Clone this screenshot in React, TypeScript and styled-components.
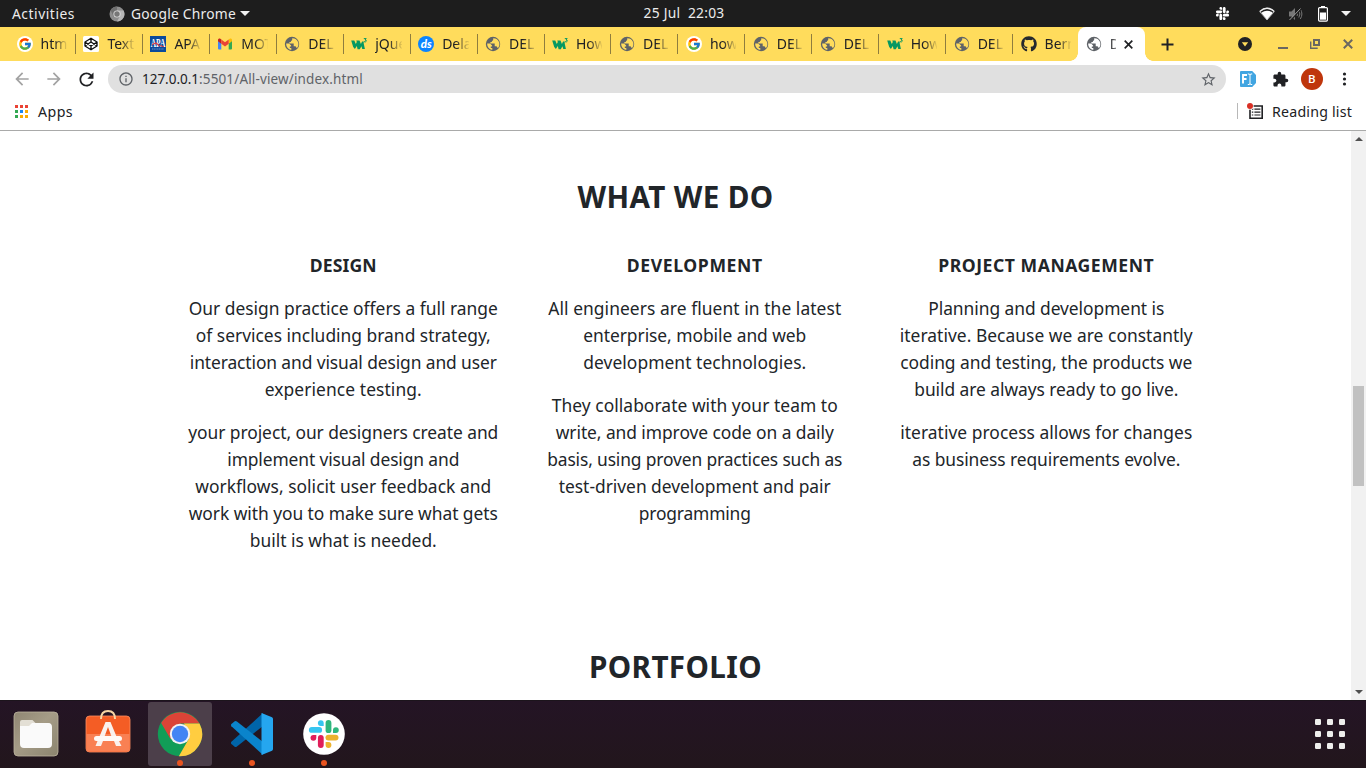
import React, { useLayoutEffect, useRef, useState } from 'react';
import styled, { createGlobalStyle } from 'styled-components';
import { FcGoogle } from 'react-icons/fc';
import { FaGithub, FaSlack } from 'react-icons/fa';
import { MdExtension, MdStarBorder, MdArrowBack, MdArrowForward, MdRefresh, MdInfoOutline } from 'react-icons/md';

const GlobalStyle = createGlobalStyle`
  * { box-sizing: border-box; }
  body { margin: 0; overflow: hidden; background: #fff; }
  svg { display: block; flex: none; }
`;

const Screen = styled.div`
  width: 1366px;
  height: 768px;
  display: flex;
  flex-direction: column;
  overflow: hidden;
  font-family: 'Noto Sans', 'Open Sans', sans-serif;
  font-size: 14px;
  color: #202124;
`;

const FitText = styled.span`
  display: inline-block;
  white-space: pre;
`;

/* Tracks a run of text so that it fills the given width. */
function Fit({ w, children }: { w: number; children: string }) {
  const ref = useRef<HTMLSpanElement>(null);
  const [spacing, setSpacing] = useState(0);
  useLayoutEffect(() => {
    const natural = ref.current!.getBoundingClientRect().width;
    setSpacing((w - natural) / children.length);
  }, [w, children]);
  return <FitText ref={ref} style={{ letterSpacing: spacing }}>{children}</FitText>;
}

/* ---------- desktop top bar ---------- */
const TopBar = styled.header`
  height: 27px;
  flex: none;
  display: grid;
  grid-template-columns: 1fr auto 1fr;
  align-items: center;
  background: #1d1d1d;
  color: #ececec;
  font-size: 13.8px;
  line-height: 26px;
`;
const TopLeft = styled.div`
  display: flex;
  align-items: center;
  padding-left: 12px;
`;
const AppMenu = styled.div`
  display: flex;
  align-items: center;
  margin-left: 34px;
  gap: 6px;
`;
const Clock = styled.div`
  padding-left: 2px;
  line-height: 24px;
  padding-bottom: 2px;
`;
const Tray = styled.div`
  display: flex;
  align-items: center;
  justify-content: flex-end;
  padding-right: 15px;
`;
const TrayItem = styled.span<{ $gap: number }>`
  display: flex;
  margin-left: ${p => p.$gap}px;
`;
const Caret = styled.i<{ $ml?: number }>`
  border: 5px solid transparent;
  border-top-color: #f2f2f2;
  border-bottom: 0;
  margin-left: ${p => p.$ml || 0}px;
`;

/* ---------- tab strip ---------- */
const TabStrip = styled.div`
  height: 34px;
  flex: none;
  display: flex;
  background: #ffdc5c;
  padding-left: 9px;
`;
const Tab = styled.div`
  width: 66.95px;
  flex: none;
  display: flex;
  align-items: center;
  padding-left: 7.5px;
`;
const TabTitle = styled.span`
  width: 27px;
  margin-left: 8px;
  overflow: hidden;
  white-space: nowrap;
  font-size: 14px;
  line-height: 20px;
  mask-image: linear-gradient(90deg, #000 50%, transparent 104%);
`;
const TabRule = styled.span<{ $hidden?: boolean }>`
  width: 1px;
  height: 20px;
  margin-left: 8px;
  background: ${p => (p.$hidden ? 'transparent' : '#8f7d3e')};
`;
const ActiveTab = styled.div`
  width: 67px;
  display: flex;
  align-items: center;
  padding-left: 8px;
  background: #fff;
  border-radius: 8px 8px 0 0;
  position: relative;
  margin-left: -2.2px;
  &::before, &::after {
    content: '';
    position: absolute;
    bottom: 0;
    width: 8px;
    height: 8px;
  }
  &::before { left: -8px; background: radial-gradient(circle at 0 0, transparent 7.5px, #fff 8px); }
  &::after { right: -8px; background: radial-gradient(circle at 100% 0, transparent 7.5px, #fff 8px); }
`;
const ActiveTitle = styled.span`
  width: 6px;
  margin: 0 8px 0 8px;
  overflow: hidden;
  line-height: 20px;
  mask-image: linear-gradient(90deg, #000, #0008);
`;
const WindowButtons = styled.div`
  flex: 1;
  display: flex;
  align-items: center;
  padding-left: 16px;
`;
const Push = styled.span`flex: 1;`;
const WinButton = styled.span<{ $mr: number }>`
  display: flex;
  margin-right: ${p => p.$mr}px;
`;
const RoundFav = styled.span<{ $bg: string }>`
  width: 16px;
  height: 16px;
  flex: none;
  border-radius: 50%;
  display: flex;
  align-items: center;
  justify-content: center;
  background: ${p => p.$bg};
  color: #fff;
  font: italic 900 11.5px/14px 'Lato', sans-serif;
`;

/* ---------- toolbar ---------- */
const Toolbar = styled.div`
  height: 36px;
  flex: none;
  display: flex;
  align-items: center;
  padding: 0 12px;
`;
const NavButton = styled.span<{ $off?: boolean }>`
  display: flex;
  flex: none;
  width: 20px;
  margin-right: 12px;
  color: ${p => (p.$off ? '#a3a3a3' : '#202124')};
`;
const Address = styled.div`
  width: 1118px;
  flex: none;
  height: 28px;
  border-radius: 14px;
  background: #e0e0e0;
  display: flex;
  align-items: center;
  padding: 0 9px 0 10px;
  color: #5f6368;
`;
const Url = styled.span`
  flex: 1;
  margin-left: 8px;
  font-size: 13.5px;
`;
const Host = styled.span`color: #202124;`;
const Avatar = styled.span`
  width: 22px;
  height: 22px;
  flex: none;
  border-radius: 50%;
  margin: 0 13px 0 12px;
  background: #bf360c;
  color: #fff;
  font: 500 11.5px/22px Roboto, sans-serif;
  text-align: center;
`;
const Extension = styled.span`
  display: flex;
  flex: none;
  margin: 0 16px 0 14px;
`;

const Bookmarks = styled.div`
  height: 34px;
  flex: none;
  display: flex;
  align-items: center;
  padding: 0 14px 5px 15px;
  border-bottom: 1px solid #a9aaa9;
  font-size: 14.2px;
  line-height: 20px;
`;
const AppsLabel = styled.span`
  margin-left: 10px;
  padding-top: 2px;
`;
const BookmarkRule = styled.span`
  width: 1px;
  height: 16px;
  background: #b8b8b8;
  margin-right: 9px;
`;
const ReadingLabel = styled.span`
  margin-left: 8px;
  padding-top: 2px;
`;

/* ---------- web page ---------- */
const Viewport = styled.main`
  height: 569px;
  flex: none;
  display: flex;
`;
const Page = styled.div`
  width: 1351px;
  color: #212529;
  text-align: center;
  padding-top: 43px;
`;
const Title = styled.h2`
  margin: 0;
  font-size: 29.6px;
  font-weight: 700;
  line-height: 45px;
`;
const Services = styled.section`
  display: grid;
  grid-template-columns: repeat(3, 351.5px);
  padding: 33px 0 0 167.5px;
  height: 425px;
`;
const Service = styled.article`
  font-size: 17.4px;
  line-height: 27px;
`;
const ServiceTitle = styled.h3`
  margin: 0 0 16px;
  font-size: 17.6px;
  font-weight: 700;
  line-height: 27px;
`;
const Paragraph = styled.p`
  margin: 0 0 16px;
`;
const Line = styled.span`
  display: block;
  height: 27px;
`;

const ScrollTrack = styled.div`
  width: 15px;
  background: #f1f1f1;
  display: flex;
  flex-direction: column;
  align-items: center;
  padding: 6px 0;
`;
const ScrollArrow = styled.i<{ $up?: boolean }>`
  border: 4px solid transparent;
  ${p => (p.$up ? 'border-bottom-color' : 'border-top-color')}: #505050;
  ${p => (p.$up ? 'border-top' : 'border-bottom')}: 0;
`;
const ScrollThumb = styled.div`
  width: 11px;
  height: 100px;
  margin: 245px 0 auto;
  background: #c1c1c1;
`;

/* ---------- dock ---------- */
const Dock = styled.footer`
  height: 68px;
  flex: none;
  display: flex;
  align-items: flex-start;
  gap: 8px;
  padding: 2px 20px 0 4px;
  background: linear-gradient(#241425, #22161c);
  box-shadow: inset 0 1px #1c141c;
`;
const DockItem = styled.div<{ $active?: boolean }>`
  width: 64px;
  height: 64px;
  border-radius: 3px;
  display: flex;
  flex-direction: column;
  align-items: center;
  padding-top: 8px;
  background: ${p => (p.$active ? '#4c3f4a' : 'transparent')};
`;
const RunningDot = styled.i`
  width: 6px;
  height: 6px;
  border-radius: 50%;
  margin-top: 2px;
  background: #e95420;
`;
const AppGrid = styled.div`
  display: grid;
  grid-template-columns: repeat(3, 6px);
  grid-auto-rows: 6px;
  gap: 6px;
  margin: 17px 1px 0 auto;
`;
const GridDot = styled.i`
  background: #eeeeec;
  border-radius: 1.2px;
`;

/* ---------- drawings ---------- */
function Globe({ land = '#ffdc5c' }: { land?: string }) {
  return (
    <svg width="16" height="16" viewBox="0 0 16 16">
      <circle cx="8" cy="8" r="7.2" fill="#5f6368" />
      <path d="M8.200 2.300v1.300c0 .8-.5 1.300-1.300 1.300v1.200H5.400v1.400h4.300v2.800h1.300q1 0 1.300 1.300l.6.500A6 6 0 0 0 10.200 2.400zM2.200 7.400h2.900l2 2v1.100H5.800v1.600h1.500v1.800A6 6 0 0 1 2.200 7.400z" fill={land} />
    </svg>
  );
}
const GoogleFav = () => <RoundFav $bg="#fff"><FcGoogle size={14} /></RoundFav>;
const CodepenFav = () => (
  <svg width="16" height="16" viewBox="0 0 16 16">
    <rect width="16" height="16" rx="1.5" fill="#fff" />
    <path d="M8 2.2l6 3.8v4l-6 3.800L2 10V6zM8 2.200V6M8 10v3.800M2 6l6 4 6-4M2 10l6-4 6 4" fill="none" stroke="#111" strokeWidth="1.350" strokeLinejoin="round" />
  </svg>
);
const ApaFav = () => (
  <svg width="16" height="16" viewBox="0 0 16 16">
    <rect width="16" height="16" fill="#0a4a9c" />
    <text x="8" y="10.500" textAnchor="middle" fontFamily="Liberation Serif" fontWeight="700" fontSize="11.500" textLength="14.500" lengthAdjust="spacingAndGlyphs" fill="#fff">APA</text>
    <path d="M2 8.500l4-1.500 3 2.500 5 1" stroke="#e33b41" strokeWidth="1.100" fill="none" />
    <path d="M2 13h12" stroke="#6c93c8" strokeWidth="1.200" strokeDasharray="1.200 .5" />
  </svg>
);
const GmailFav = () => (
  <svg width="16" height="16" viewBox="0 0 16 16">
    <path d="M1 4.200v8.300q0 1 1 1h2.300V7z" fill="#4285f4" />
    <path d="M15 4.200v8.300q0 1-1 1h-2.300V7z" fill="#34a853" />
    <path d="M11.700 3.400L13 2.600q2-.7 2 1.400v1.200l-3.300 2.500z" fill="#fbbc04" />
    <path d="M4.300 3.400L3 2.600Q1 1.900 1 4v1.200l3.300 2.500z" fill="#c5221f" />
    <path d="M4.300 3.400L8 6.200l3.700-2.800v4.300L8 10.500 4.300 7.700z" fill="#ea4335" />
  </svg>
);
const W3Fav = () => (
  <svg width="16" height="16" viewBox="0 0 16 16">
    <path d="M.2 4.500h3.100l1.500 3.600 1-2.200-.5-1.400h3.200l1.400 3.400 1.200-2.400h1.600v2l1.200 5.500h-2.600l-.9-2.800-1.600 3H6.600L5.800 10l-1.900 3L2.200 11z" fill="#059862" />
    <path d="M12.800 2.600h2.400L14 4q1.600.1 1.300 1.200-.6 1.100-2.300.5" stroke="#059862" strokeWidth="1" fill="none" />
  </svg>
);
const DsFav = () => <RoundFav $bg="#0b84ff">ds</RoundFav>;
const GithubFav = () => <FaGithub size={16} color="#24292e" />;

const TopChrome = () => (
  <svg width="16" height="16" viewBox="0 0 16 16">
    <circle cx="8" cy="8" r="7.500" fill="#8d8d8d" />
    <path d="M8 8V.5A7.500 7.500 0 0 0 1.500 4.300L5 11z" fill="#6f6f6f" />
    <path d="M8 4.500h6.600A7.500 7.500 0 0 1 8 15.500L11 10z" fill="#b5b5b5" />
    <circle cx="8" cy="8" r="3.600" fill="#ddd" />
    <circle cx="8" cy="8" r="2.700" fill="#777" />
  </svg>
);
const WifiIcon = () => (
  <svg width="16" height="14" viewBox="0 0 16 14">
    <path d="M.7 4.600Q8-2.200 15.300 4.600L8 13z" fill="none" stroke="#a5a5a5" strokeWidth="1" />
    <path d="M2.200 5.800Q8 1.800 13.800 5.800L8 12.800z" fill="#fff" />
    <path d="M.8 4.400Q8-1.900 15.200 4.400" fill="none" stroke="#eee" strokeWidth="1.300" />
  </svg>
);
const MuteIcon = () => (
  <svg width="15" height="14" viewBox="0 0 15 14" fill="none" stroke="#777">
    <path d="M1 4.500h2.500L7 1v12L3.500 9.500H1z" fill="#777" stroke="none" />
    <path d="M9 5q1.200 2 0 4M10.800 3.500q2.200 3.500 0 7M12.300 2q3.200 5 0 10" />
    <path d="M2.500 13.500L13.500 1.500" stroke="#1d1d1d" strokeWidth="1.500" />
    <path d="M1.500 13L12.500 1.500" stroke="#999" strokeWidth="1" />
  </svg>
);
const BatteryIcon = () => (
  <svg width="10" height="16" viewBox="0 0 10 16">
    <path d="M3 0h4v1.500H3z" fill="#fff" />
    <rect x=".6" y="1.600" width="8.800" height="13.500" rx="1" fill="none" stroke="#fff" strokeWidth="1.200" />
    <rect x="2" y="6.500" width="6" height="7.200" fill="#fff" />
  </svg>
);
const AppsIcon = () => (
  <svg width="13" height="13" viewBox="0 0 13 13">
    {['#ea4335', '#ea4335', '#ea4335', '#34a853', '#1a86f0', '#fbab00', '#34a853', '#fbab00', '#fbab00'].map((c, i) => (
      <rect key={i} x={(i % 3) * 5} y={Math.floor(i / 3) * 5} width="3" height="3" fill={c} />
    ))}
  </svg>
);
const ReadingIcon = () => (
  <svg width="17" height="17" viewBox="0 0 17 17">
    <path d="M3 3h12.200v12.200H3z" fill="none" stroke="#202124" strokeWidth="1.600" />
    <path d="M4.800 6.200h1.500M7.400 6.200h6M4.800 9.100h1.500M7.400 9.100h6M4.800 12h1.500M7.400 12h6" stroke="#202124" strokeWidth="1.200" />
    <circle cx="3" cy="3" r="3.700" fill="#fff" />
    <circle cx="3" cy="3" r="3" fill="#d93025" />
  </svg>
);
const FontExtIcon = () => (
  <svg width="16" height="16" viewBox="0 0 16 16">
    <path d="M1 0h11.200L16 4v8l-3.800 4H1q-1 0-1-1V1q0-1 1-1z" fill="#41a5e1" />
    <path d="M3 12.500V4h4M3 8h3.500" stroke="#fff" strokeWidth="1.900" fill="none" />
    <path d="M7.800 3h1.200l1 .6 1-.6h1.200M10 3.500v9.500M7.800 13.500H9l1-.6 1 .6h1.200" stroke="#fff" fill="none" />
  </svg>
);

const FilesIcon = () => (
  <svg width="46" height="48" viewBox="0 0 46 48">
    <defs>
      <linearGradient id="files" x1="0" y1="0" x2="1" y2="1"><stop stopColor="#8f8673" /><stop offset=".45" stopColor="#a59c87" /><stop offset="1" stopColor="#8b846e" /></linearGradient>
    </defs>
    <rect x="1" y="2" width="44" height="44" rx="4" fill="url(#files)" stroke="#bdb49e" strokeWidth=".8" />
    <path d="M9 10h10.500l3 3H35q3 0 3 3v4H7v-8q0-2 2-2z" fill="#e3dfd5" />
    <path d="M7 16h9l3-3h16q4 0 4 4v17q0 4-4 4H11q-4 0-4-4z" fill="#fafafa" />
  </svg>
);
const StoreIcon = () => (
  <svg width="46" height="48" viewBox="0 0 46 48">
    <rect x="1" y="6" width="44" height="36" rx="3.500" fill="#f45d25" stroke="#ff9163" strokeWidth=".8" />
    <path d="M1.400 24h43.200v14.500q0 3-3 3H4.400q-3 0-3-3z" fill="#f98053" />
    <path d="M16 9q0-8 7-8t7 8" fill="none" stroke="#f7d6a4" strokeWidth="2" />
    <path d="M20.500 12h5l6 14.500h-5L23 17l-3.500 9.500h-5zM12.500 31h5.500l-2 5h-5.500zM29 31h5l2.500 5H31z" fill="#faf1ed" />
    <rect x="9" y="26" width="28" height="5" rx="2.500" fill="#fffaf7" />
  </svg>
);
const ChromeIcon = () => (
  <svg width="46" height="48" viewBox="0 0 46 48">
    <circle cx="23" cy="24" r="22.200" fill="#119d57" />
    <path d="M4.200 13A22.200 22.200 0 0 1 42.500 13.600H23L13.500 29z" fill="#db4437" />
    <path d="M42.500 13.600A22.200 22.200 0 0 1 21.800 46.200L32 28.500 27 13.600z" fill="#ffcd40" />
    <circle cx="23" cy="24" r="10.200" fill="#f2f2f2" />
    <circle cx="23" cy="24" r="8.200" fill="#4285f4" />
  </svg>
);
const CodeIcon = () => (
  <svg width="46" height="48" viewBox="0 0 46 48">
    <path d="M34 3L2.400 31.800Q1.500 33 2.400 34l3 2.500q1.200 1 2.500 0L34 16z" fill="#0065a9" />
    <path d="M34 45L2.400 16.200Q1.500 15 2.400 14l3-2.500q1.200-1 2.500 0L34 32z" fill="#0a84cc" />
    <path d="M32.500 3l10.500 4.300q1 .5 1 1.700v30q0 1.200-1 1.700L32.500 45z" fill="#25a6ef" />
  </svg>
);
const SlackIcon = () => (
  <svg width="46" height="48" viewBox="0 0 46 48">
    <circle cx="23" cy="24" r="20.800" fill="#fff" />
    <path d="M10.800 19.900h7.400" stroke="#36c5f0" strokeWidth="5.800" strokeLinecap="round" />
    <path d="M27.500 13v7.200" stroke="#2eb67d" strokeWidth="5.800" strokeLinecap="round" />
    <path d="M19.800 27.800v7.200" stroke="#e01e5a" strokeWidth="5.800" strokeLinecap="round" />
    <path d="M27.400 27.600h7.200" stroke="#ecb22e" strokeWidth="5.800" strokeLinecap="round" />
    <path d="M22.700 16h-2.900a2.900 2.900 0 1 1 2.900-2.900z" fill="#36c5f0" />
    <path d="M32 23v-2.900a2.900 2.900 0 1 1 2.900 2.900z" fill="#2eb67d" />
    <path d="M24.600 32.100h2.900a2.900 2.900 0 1 1-2.900 2.900z" fill="#ecb22e" />
    <path d="M15.300 24.900v2.900a2.900 2.900 0 1 1-2.900-2.900z" fill="#e01e5a" />
  </svg>
);

/* ---------- data ---------- */
const tabs: { icon: React.FC; title: string }[] = [
  { icon: GoogleFav, title: 'htm' },
  { icon: CodepenFav, title: 'Text' },
  { icon: ApaFav, title: 'APA' },
  { icon: GmailFav, title: 'MOT' },
  { icon: Globe, title: 'DEL' },
  { icon: W3Fav, title: 'jQue' },
  { icon: DsFav, title: 'Dela' },
  { icon: Globe, title: 'DEL' },
  { icon: W3Fav, title: 'How' },
  { icon: Globe, title: 'DEL' },
  { icon: GoogleFav, title: 'how' },
  { icon: Globe, title: 'DEL' },
  { icon: Globe, title: 'DEL' },
  { icon: W3Fav, title: 'How' },
  { icon: Globe, title: 'DEL' },
  { icon: GithubFav, title: 'Bern' },
];

type TextLine = [string, number];
const services: { title: TextLine; paragraphs: TextLine[][] }[] = [
  {
    title: ['DESIGN', 67],
    paragraphs: [
      [
        ['Our design practice offers a full range', 309],
        ['of services including brand strategy,', 295],
        ['interaction and visual design and user', 307],
        ['experience testing.', 157],
      ],
      [
        ['your project, our designers create and', 310],
        ['implement visual design and', 232],
        ['workflows, solicit user feedback and', 296],
        ['work with you to make sure what gets', 309],
        ['built is what is needed.', 187],
      ],
    ],
  },
  {
    title: ['DEVELOPMENT', 136],
    paragraphs: [
      [
        ['All engineers are fluent in the latest', 293],
        ['enterprise, mobile and web', 223],
        ['development technologies.', 223],
      ],
      [
        ['They collaborate with your team to', 286],
        ['write, and improve code on a daily', 278],
        ['basis, using proven practices such as', 295],
        ['test-driven development and pair', 272],
        ['programming', 112],
      ],
    ],
  },
  {
    title: ['PROJECT MANAGEMENT', 216],
    paragraphs: [
      [
        ['Planning and development is', 236],
        ['iterative. Because we are constantly', 293],
        ['coding and testing, the products we', 292],
        ['build are always ready to go live.', 264],
      ],
      [
        ['iterative process allows for changes', 292],
        ['as business requirements evolve.', 268],
      ],
    ],
  },
];

export default function App() {
  return (
    <Screen>
      <GlobalStyle />
      <TopBar>
        <TopLeft>
          <Fit w={63}>Activities</Fit>
          <AppMenu>
            <TopChrome />
            <Fit w={105}>Google Chrome</Fit>
            <Caret $ml={-2} />
          </AppMenu>
        </TopLeft>
        <Clock><Fit w={81}>25 Jul  22:03</Fit></Clock>
        <Tray>
          <TrayItem $gap={0}><FaSlack size={15} color="#fff" /></TrayItem>
          <TrayItem $gap={29}><WifiIcon /></TrayItem>
          <TrayItem $gap={13}><MuteIcon /></TrayItem>
          <TrayItem $gap={15}><BatteryIcon /></TrayItem>
          <Caret $ml={13} />
        </Tray>
      </TopBar>

      <TabStrip>
        {tabs.map(({ icon: Icon, title }, i) => (
          <Tab key={i}>
            <Icon />
            <TabTitle>{title}</TabTitle>
            <TabRule $hidden={i === tabs.length - 1} />
          </Tab>
        ))}
        <ActiveTab>
          <Globe land="#fff" />
          <ActiveTitle>D</ActiveTitle>
          <svg width="9" height="9" viewBox="0 0 9 9" stroke="#202124" strokeWidth="1.700"><path d="M.7.7l7.600 7.600M8.300.7L.7 8.300" /></svg>
        </ActiveTab>
        <WindowButtons>
          <svg width="13" height="13" viewBox="0 0 13 13" stroke="#202124" strokeWidth="2"><path d="M6.500.5v12M.5 6.500h12" /></svg>
          <Push />
          <WinButton $mr={26}>
            <svg width="14" height="14" viewBox="0 0 14 14"><circle cx="7" cy="7" r="7" fill="#202124" /><path d="M3.800 5.300h6.400L7 9.600z" fill="#ffdc5c" /></svg>
          </WinButton>
          <WinButton $mr={22}>
            <svg width="10" height="10" viewBox="0 0 10 10"><path d="M0 8h10v2H0z" fill="#6b6761" /></svg>
          </WinButton>
          <WinButton $mr={23}>
            <svg width="10" height="10" viewBox="0 0 10 10" fill="none" stroke="#6b6761"><path d="M4 1h5v5H4z" strokeWidth="2" /><path d="M.7 2.500v6.800h7" strokeWidth="1.400" /></svg>
          </WinButton>
          <WinButton $mr={13}>
            <svg width="10" height="10" viewBox="0 0 10 10" stroke="#6b6761" strokeWidth="2"><path d="M.8.8l8.400 8.400M9.200.8L.8 9.200" /></svg>
          </WinButton>
        </WindowButtons>
      </TabStrip>

      <Toolbar>
        <NavButton $off><MdArrowBack size={20} /></NavButton>
        <NavButton $off><MdArrowForward size={20} /></NavButton>
        <NavButton><MdRefresh size={21} /></NavButton>
        <Address>
          <MdInfoOutline size={16} />
          <Url><Host><Fit w={57}>127.0.0.1</Fit></Host><Fit w={164}>:5501/All-view/index.html</Fit></Url>
          <MdStarBorder size={17} />
        </Address>
        <Extension><FontExtIcon /></Extension>
        <MdExtension size={17} color="#202124" />
        <Avatar>B</Avatar>
        <svg width="20" height="14" viewBox="0 0 20 14" fill="#202124"><circle cx="8.500" cy="2" r="1.600" /><circle cx="8.500" cy="7" r="1.600" /><circle cx="8.500" cy="12" r="1.600" /></svg>
      </Toolbar>

      <Bookmarks>
        <AppsIcon />
        <AppsLabel><Fit w={35}>Apps</Fit></AppsLabel>
        <Push />
        <BookmarkRule />
        <ReadingIcon />
        <ReadingLabel><Fit w={80}>Reading list</Fit></ReadingLabel>
      </Bookmarks>

      <Viewport>
        <Page>
          <Title><Fit w={196}>WHAT WE DO</Fit></Title>
          <Services>
            {services.map(service => (
              <Service key={service.title[0]}>
                <ServiceTitle><Fit w={service.title[1]}>{service.title[0]}</Fit></ServiceTitle>
                {service.paragraphs.map((lines, i) => (
                  <Paragraph key={i}>
                    {lines.map(([text, width]) => (
                      <Line key={text}><Fit w={width}>{text}</Fit></Line>
                    ))}
                  </Paragraph>
                ))}
              </Service>
            ))}
          </Services>
          <Title><Fit w={173}>PORTFOLIO</Fit></Title>
        </Page>
        <ScrollTrack>
          <ScrollArrow $up />
          <ScrollThumb />
          <ScrollArrow />
        </ScrollTrack>
      </Viewport>

      <Dock>
        <DockItem><FilesIcon /></DockItem>
        <DockItem><StoreIcon /></DockItem>
        <DockItem $active><ChromeIcon /><RunningDot /></DockItem>
        <DockItem><CodeIcon /><RunningDot /></DockItem>
        <DockItem><SlackIcon /><RunningDot /></DockItem>
        <AppGrid>{Array.from({ length: 9 }, (_, i) => <GridDot key={i} />)}</AppGrid>
      </Dock>
    </Screen>
  );
}
